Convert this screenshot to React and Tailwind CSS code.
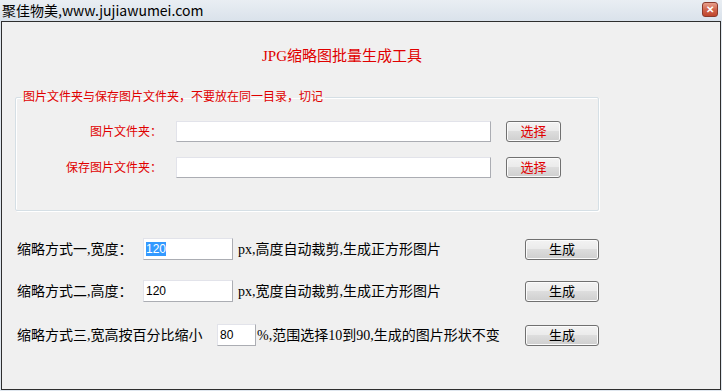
import React from "react";

const F = { fontFamily: '"Liberation Serif", "Noto Sans CJK SC", serif' };

function WinButton({ children, className = "" }) {
  return (
    <div
      className={
        "flex items-center justify-center rounded-[3px] border border-[#707070] bg-[linear-gradient(#f3f3f3,#ebebeb_45%,#dddddd_50%,#cfcfcf)] shadow-[inset_0_0_0_1px_#fbfbfb] text-[13px] leading-none " +
        className
      }
    >
      {children}
    </div>
  );
}

function Input({ value, className = "", selected = false }) {
  return (
    <div
      className={
        "flex items-center border border-[#abadb3] border-t-[#e2e3ea] border-l-[#e2e3ea] bg-white pl-[2px] text-[12px] font-['Liberation_Sans'] " +
        className
      }
    >
      {value ? (
        <span className={selected ? "bg-[#3399ff] text-white px-[0px] leading-[14px]" : "leading-[14px]"}>{value}</span>
      ) : null}
    </div>
  );
}

export default function App() {
  return (
    <div className="w-[722px] h-[391px] bg-[#dfe6ee] overflow-hidden" style={F}>
      {/* title bar */}
      <div className="h-[21px] flex items-start justify-between bg-[linear-gradient(#e9eef3,#dae2eb)]">
        <div className="pl-[2px] pt-[1px] text-[14px] leading-[18px] text-black font-['Noto_Sans_CJK_SC']">
          聚佳物美,www.jujiawumei.com
        </div>
        <div className="mr-[4px] mt-[2px] w-[16px] h-[15px] rounded-[3px] border border-[#8b3a2c] bg-[linear-gradient(#e8a08c,#d0654d_50%,#c0452c)] flex items-center justify-center">
          <span className="text-white text-[10px] font-bold leading-none font-['Liberation_Sans']">✕</span>
        </div>
      </div>
      {/* body */}
      <div className="mx-[1px] h-[369px] border border-[#2e2e2e] bg-[#f0f0f0] pl-[13px]">
        <div className="pl-[247px] pt-[25px] text-[15px] leading-[18px] text-[#e00000]">JPG缩略图批量生成工具</div>
        <fieldset className="mt-[25px] w-[584px] h-[121px] border border-[#d5dfe5] shadow-[inset_1px_1px_0_#ffffff,1px_1px_0_#ffffff] rounded-[2px]">
          <legend className="ml-[5px] px-[2px] text-[12px] leading-[14px] text-[#e00000]">
            图片文件夹与保存图片文件夹，不要放在同一目录，切记
          </legend>
          <div className="flex flex-col gap-[15px] pt-[17px]">
            <div className="flex items-center h-[21px]">
              <div className="w-[146px] text-right text-[12px] text-[#e00000]">图片文件夹：</div>
              <Input className="ml-[14px] w-[315px] h-[21px]" />
              <WinButton className="ml-[15px] w-[55px] h-[21px] text-[#e00000]">选择</WinButton>
            </div>
            <div className="flex items-center h-[21px]">
              <div className="w-[146px] text-right text-[12px] text-[#e00000]">保存图片文件夹：</div>
              <Input className="ml-[14px] w-[315px] h-[21px]" />
              <WinButton className="ml-[15px] w-[55px] h-[21px] text-[#e00000]">选择</WinButton>
            </div>
          </div>
        </fieldset>
        <div className="flex flex-col pt-[27px] pl-[2px] text-[14px] text-black">
          <div className="flex items-center h-[22px]">
            <div className="w-[126px]">缩略方式一,宽度：</div>
            <Input className="w-[90px] h-[22px]" value="120" selected />
            <div className="ml-[5px] w-[287px]">px,高度自动裁剪,生成正方形图片</div>
            <WinButton className="w-[74px] h-[21px]">生成</WinButton>
          </div>
          <div className="flex items-center h-[22px] mt-[20px]">
            <div className="w-[126px]">缩略方式二,高度：</div>
            <Input className="w-[90px] h-[22px]" value="120" />
            <div className="ml-[5px] w-[287px]">px,宽度自动裁剪,生成正方形图片</div>
            <WinButton className="w-[74px] h-[21px]">生成</WinButton>
          </div>
          <div className="flex items-center h-[22px] mt-[22px]">
            <div className="w-[200px]">缩略方式三,宽高按百分比缩小</div>
            <Input className="w-[39px] h-[22px]" value="80" />
            <div className="ml-[1px] w-[268px]">%,范围选择10到90,生成的图片形状不变</div>
            <WinButton className="w-[74px] h-[21px]">生成</WinButton>
          </div>
        </div>
      </div>
    </div>
  );
}
